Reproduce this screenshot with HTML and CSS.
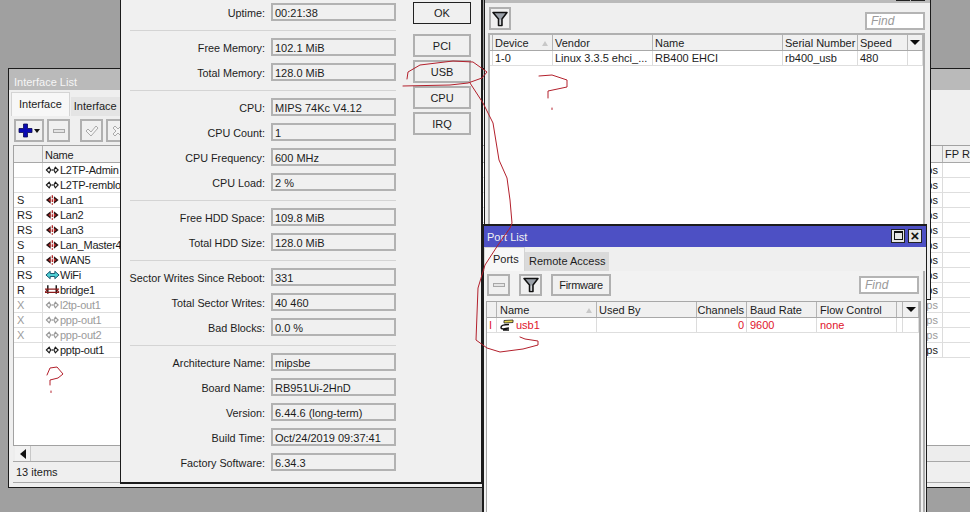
FILE: index.html
```html
<!DOCTYPE html>
<html lang="en">
<head>
<meta charset="utf-8">
<title>Interface List</title>
<link rel="stylesheet" href="styles.css">
</head>
<body>
<svg class="defs" width="0" height="0" aria-hidden="true">
  <defs>
    <symbol id="ic-tunnel" viewBox="0 0 16 10">
      <path d="M1.500 5 4.500 2l1.500 3-1.500 3zM14 5l-3-3-1.500 3 1.500 3z" fill="#f2f2f2" stroke="#1a1a1a" stroke-width="1.200"/>
      <path d="M6.800 5h2" stroke="#222" stroke-width="1.400"/>
    </symbol>
    <symbol id="ic-tunnel-off" viewBox="0 0 16 10">
      <path d="M1.500 5 4.500 2l1.500 3-1.500 3zM14 5l-3-3-1.500 3 1.500 3z" fill="#f6f6f6" stroke="#999" stroke-width="1.200"/>
      <path d="M6.800 5h2" stroke="#999" stroke-width="1.400"/>
    </symbol>
    <symbol id="ic-lan" viewBox="0 0 16 10">
      <path d="M1 5 6 1v8zM14.500 5l-5-4v8z" fill="#2a1414"/>
      <path d="M3.500 5 6 3v4zM12 5 9.500 3v4z" fill="#c02828"/>
      <path d="M7.800 0v10" stroke="#b01818" stroke-width="1.300" stroke-dasharray="3 1.200"/>
    </symbol>
    <symbol id="ic-wifi" viewBox="0 0 16 10">
      <path d="M1 5 5.500 1v2.400h5V1L15 5l-4.500 4V6.600h-5V9z" fill="#4fd0d4" stroke="#14506a" stroke-width="1"/>
    </symbol>
    <symbol id="ic-bridge" viewBox="0 0 16 10">
      <path d="M3 0v9M12 0v9" stroke="#111" stroke-width="1.500"/>
      <path d="M0 4h15M0 7.500h15M3 4 0 7.500M12 4l3 3.500" stroke="#8a1c1c" stroke-width="1.200" fill="none"/>
    </symbol>
    <symbol id="ic-filter" viewBox="0 0 16 16">
      <path d="M1 1.500h14L10 8v6.500H6.500V8z" fill="#9aa0a8" stroke="#111" stroke-width="1.500" stroke-linejoin="round"/>
      <path d="M8.200 8.500v5.500" stroke="#e8e8e8" stroke-width="1"/>
    </symbol>
  </defs>
</svg>

<main class="desktop">

  <section class="win win-iface">
    <header class="title title-idle title-iface">Interface List</header>
    <div class="tabs">
      <span class="tab tab-on">Interface</span>
      <span class="tab tab-off tab-wide">Interface List</span>
    </div>
    <div class="toolbar">
      <button class="btn btn-add">
        <svg width="15" height="15" viewBox="0 0 15 15"><path d="M5.500 1h4v4.500H14v4H9.500V14h-4V9.500H1v-4h4.500z" fill="#0a0ab4" stroke="#0b0b50" stroke-width=".8"/></svg>
        <i class="caret caret-small"></i>
      </button>
      <button class="btn btn-sq"><i class="dash"></i></button>
      <button class="btn btn-sq btn-sep">
        <svg width="14" height="12" viewBox="0 0 14 12"><path d="m1 6 2-2 3 3 5-6 2 2-7 8z" fill="#f4f4f4" stroke="#aaa"/></svg>
      </button>
      <button class="btn btn-sq">
        <svg width="12" height="12" viewBox="0 0 12 12"><path d="M1 3 3 1l3 3 3-3 2 2-3 3 3 3-2 2-3-3-3 3-2-2 3-3z" fill="#f4f4f4" stroke="#aaa"/></svg>
      </button>
    </div>
    <div class="table table-iface">
      <div class="row row-head">
        <span class="cell c-flag"></span><span class="cell c-iname">Name</span><span class="cell c-rate"></span><span class="cell c-fp">FP Rx</span>
      </div>
      <div class="row"><span class="cell c-flag"></span><span class="cell c-iname"><svg class="ic"><use href="#ic-tunnel"/></svg>L2TP-Admin</span><span class="cell c-rate">0 bps</span><span class="cell c-fp"></span></div>
      <div class="row"><span class="cell c-flag"></span><span class="cell c-iname"><svg class="ic"><use href="#ic-tunnel"/></svg>L2TP-remblock</span><span class="cell c-rate">0 bps</span><span class="cell c-fp"></span></div>
      <div class="row"><span class="cell c-flag">S</span><span class="cell c-iname"><svg class="ic"><use href="#ic-lan"/></svg>Lan1</span><span class="cell c-rate">0 bps</span><span class="cell c-fp"></span></div>
      <div class="row"><span class="cell c-flag">RS</span><span class="cell c-iname"><svg class="ic"><use href="#ic-lan"/></svg>Lan2</span><span class="cell c-rate">0 bps</span><span class="cell c-fp"></span></div>
      <div class="row"><span class="cell c-flag">RS</span><span class="cell c-iname"><svg class="ic"><use href="#ic-lan"/></svg>Lan3</span><span class="cell c-rate">0 bps</span><span class="cell c-fp"></span></div>
      <div class="row"><span class="cell c-flag">S</span><span class="cell c-iname"><svg class="ic"><use href="#ic-lan"/></svg>Lan_Master4</span><span class="cell c-rate">0 bps</span><span class="cell c-fp"></span></div>
      <div class="row"><span class="cell c-flag">R</span><span class="cell c-iname"><svg class="ic"><use href="#ic-lan"/></svg>WAN5</span><span class="cell c-rate">0 bps</span><span class="cell c-fp"></span></div>
      <div class="row"><span class="cell c-flag">RS</span><span class="cell c-iname"><svg class="ic"><use href="#ic-wifi"/></svg>WiFi</span><span class="cell c-rate">0 bps</span><span class="cell c-fp"></span></div>
      <div class="row"><span class="cell c-flag">R</span><span class="cell c-iname"><svg class="ic"><use href="#ic-bridge"/></svg>bridge1</span><span class="cell c-rate">0 bps</span><span class="cell c-fp"></span></div>
      <div class="row row-off"><span class="cell c-flag">X</span><span class="cell c-iname"><svg class="ic"><use href="#ic-tunnel-off"/></svg>l2tp-out1</span><span class="cell c-rate">0 bps</span><span class="cell c-fp"></span></div>
      <div class="row row-off"><span class="cell c-flag">X</span><span class="cell c-iname"><svg class="ic"><use href="#ic-tunnel-off"/></svg>ppp-out1</span><span class="cell c-rate">0 bps</span><span class="cell c-fp"></span></div>
      <div class="row row-off"><span class="cell c-flag">X</span><span class="cell c-iname"><svg class="ic"><use href="#ic-tunnel-off"/></svg>ppp-out2</span><span class="cell c-rate">0 bps</span><span class="cell c-fp"></span></div>
      <div class="row"><span class="cell c-flag"></span><span class="cell c-iname"><svg class="ic"><use href="#ic-tunnel"/></svg>pptp-out1</span><span class="cell c-rate">0 bps</span><span class="cell c-fp"></span></div>
    </div>
    <div class="hscroll"><span class="scroll-btn"><i class="arrow-left"></i></span></div>
    <div class="status">13 items</div>
  </section>

  <section class="win win-device">
    <header class="title title-idle title-device">
      <span class="tb-btn"></span><span class="tb-btn"></span>
    </header>
    <div class="toolbar toolbar-device">
      <button class="btn btn-sq btn-filter"><svg width="16" height="16"><use href="#ic-filter"/></svg></button>
      <span class="find find-device">Find</span>
    </div>
    <div class="table table-device">
      <div class="row row-head">
        <span class="cell d-gap"></span>
        <span class="cell d-dev">Device<i class="sort"></i></span>
        <span class="cell d-ven">Vendor</span>
        <span class="cell d-nam">Name</span>
        <span class="cell d-ser">Serial Number</span>
        <span class="cell d-spd">Speed</span>
        <span class="cell d-more"><i class="caret"></i></span>
      </div>
      <div class="row">
        <span class="cell d-gap"></span>
        <span class="cell d-dev">1-0</span>
        <span class="cell d-ven">Linux 3.3.5 ehci_...</span>
        <span class="cell d-nam">RB400 EHCI</span>
        <span class="cell d-ser">rb400_usb</span>
        <span class="cell d-spd">480</span>
        <span class="cell d-more"></span>
      </div>
    </div>
  </section>

  <section class="win win-info">
    <div class="info-fields">
      <div class="info-row"><span class="info-label">Uptime:</span><span class="field">00:21:38</span></div>
      <hr class="rule">
      <div class="info-row"><span class="info-label">Free Memory:</span><span class="field">102.1 MiB</span></div>
      <div class="info-row"><span class="info-label">Total Memory:</span><span class="field">128.0 MiB</span></div>
      <hr class="rule">
      <div class="info-row"><span class="info-label">CPU:</span><span class="field">MIPS 74Kc V4.12</span></div>
      <div class="info-row"><span class="info-label">CPU Count:</span><span class="field">1</span></div>
      <div class="info-row"><span class="info-label">CPU Frequency:</span><span class="field">600 MHz</span></div>
      <div class="info-row"><span class="info-label">CPU Load:</span><span class="field">2 %</span></div>
      <hr class="rule">
      <div class="info-row"><span class="info-label">Free HDD Space:</span><span class="field">109.8 MiB</span></div>
      <div class="info-row"><span class="info-label">Total HDD Size:</span><span class="field">128.0 MiB</span></div>
      <hr class="rule">
      <div class="info-row"><span class="info-label">Sector Writes Since Reboot:</span><span class="field">331</span></div>
      <div class="info-row"><span class="info-label">Total Sector Writes:</span><span class="field">40 460</span></div>
      <div class="info-row"><span class="info-label">Bad Blocks:</span><span class="field">0.0 %</span></div>
      <hr class="rule">
      <div class="info-row"><span class="info-label">Architecture Name:</span><span class="field">mipsbe</span></div>
      <div class="info-row"><span class="info-label">Board Name:</span><span class="field">RB951Ui-2HnD</span></div>
      <div class="info-row"><span class="info-label">Version:</span><span class="field">6.44.6 (long-term)</span></div>
      <div class="info-row"><span class="info-label">Build Time:</span><span class="field">Oct/24/2019 09:37:41</span></div>
      <div class="info-row"><span class="info-label">Factory Software:</span><span class="field">6.34.3</span></div>
    </div>
    <div class="info-actions">
      <button class="btn action action-ok">OK</button>
      <button class="btn action">PCI</button>
      <button class="btn action">USB</button>
      <button class="btn action">CPU</button>
      <button class="btn action">IRQ</button>
    </div>
  </section>

  <section class="win win-port">
    <header class="title title-active">
      <span>Port List</span>
      <span class="tb-group">
        <span class="tb-btn tb-max"><i></i></span>
        <span class="tb-btn tb-close">×</span>
      </span>
    </header>
    <div class="tabs tabs-port">
      <span class="tab tab-on tab-ports">Ports</span>
      <span class="tab tab-off tab-remote">Remote Access</span>
    </div>
    <div class="port-panel">
      <div class="toolbar toolbar-port">
        <button class="btn btn-sq"><i class="dash"></i></button>
        <button class="btn btn-sq btn-sep"><svg width="16" height="16"><use href="#ic-filter"/></svg></button>
        <button class="btn btn-text">Firmware</button>
        <span class="find find-port">Find</span>
      </div>
      <div class="table table-port">
        <div class="row row-head">
          <span class="cell p-flag"></span>
          <span class="cell p-name">Name<i class="sort"></i></span>
          <span class="cell p-used">Used By</span>
          <span class="cell p-chan">Channels</span>
          <span class="cell p-baud">Baud Rate</span>
          <span class="cell p-flow">Flow Control</span>
          <span class="cell p-gap"></span>
          <span class="cell p-more"><i class="caret"></i></span>
        </div>
        <div class="row row-alert">
          <span class="cell p-flag">I</span>
          <span class="cell p-name">
            <svg class="ic-usb" width="15" height="12" viewBox="0 0 15 12"><path d="M4 1.500 13 1v2.500L4 4z" fill="#e8d84a" stroke="#222" stroke-width=".8"/><path d="M9 5.500C4 5.500 1 6 1 8.500s5 1 8 .5M3 11h6" fill="none" stroke="#111" stroke-width="1.400"/></svg>usb1
          </span>
          <span class="cell p-used"></span>
          <span class="cell p-chan">0</span>
          <span class="cell p-baud">9600</span>
          <span class="cell p-flow">none</span>
          <span class="cell p-gap"></span>
          <span class="cell p-more"></span>
        </div>
      </div>
    </div>
  </section>

  <svg class="ink" viewBox="0 0 970 512" width="970" height="512" aria-hidden="true">
    <path d="M403 86 450 85 468 83 482 78 487 72 473 62 453 61 420 65 408 72 407 79"/>
    <path d="M470 83 483 103 493 123 499 160 507 178 510 200 512 223 510 228 498 245 485 265 478 288 476 340 487 348 500 352 523 349 538 345 538 341 525 339 520 337"/>
    <path d="M539 76 552 75 567 80 567 87 548 91 548 98M552 108v1.500"/>
    <path d="M47 375 50 368 57 367 63 374 58 378 50 380 50 385M51 391v1.500"/>
  </svg>
</main>
</body>
</html>
```
FILE: styles.css
```css
* { box-sizing: border-box; }

html, body { margin: 0; padding: 0; }

body {
  font-family: "Liberation Sans", Arial, sans-serif;
  font-size: 11px;
  color: #1c1c1c;
}

.defs { position: absolute; }

.desktop {
  position: relative;
  width: 970px;
  height: 512px;
  overflow: hidden;
  background: #a0a0a0;
}

.win {
  position: absolute;
  display: flex;
  flex-direction: column;
  background: #efefef;
  border: 1px solid #1c1c1c;
}

.win-iface { left: 8px; top: 68px; width: 1000px; height: 420px; }
.win-device { left: 484px; top: -18px; width: 447px; height: 318px; }
.win-info { left: 120px; top: -2px; width: 363px; height: 486px; flex-direction: row; background: #f0f0f0; padding: 4px 0 0 1px; border-right-width: 2px; border-bottom-width: 2px; }
.win-port { left: 482px; top: 224px; width: 445px; height: 300px; border-width: 2px 1px 1px 2px; }

/* title bars */
.title {
  flex: none;
  display: flex;
  align-items: center;
  height: 21px;
  padding-left: 5px;
  font-size: 11px;
}
.title-iface { padding-top: 5px; }
.title-idle { background: #bababa; color: #f6f6f6; }
.title-active { justify-content: space-between; padding-right: 4px; background: #4d50c4; color: #f2f2f2; padding-left: 3px; }
.title-device { justify-content: flex-end; align-items: flex-end; gap: 1px; height: 20px; padding-right: 5px; }
.tb-group { display: flex; gap: 3px; margin-bottom: 2px; }
.tb-btn {
  display: flex;
  align-items: center;
  justify-content: center;
  width: 14px;
  height: 14px;
  background: #e6e6e6;
  border: 1px solid #222;
  color: #111;
  font-size: 15px;
  line-height: 1;
  font-weight: bold;
}
.title-device .tb-btn { margin-bottom: 2px; height: 12px; }
.tb-max i { width: 9px; height: 9px; border: 1px solid #111; border-top-width: 2px; }

/* tabs */
.tabs {
  flex: none;
  display: flex;
  align-items: flex-end;
  height: 26px;
  padding-left: 2px;
}
.tab {
  display: flex;
  align-items: center;
  height: 24px;
  padding: 0 7px 2px;
  white-space: nowrap;
}
.tab-on { background: #f7f7f7; border: 1px solid #d4d4d4; border-bottom: 0; }
.tab-off { height: 19px; background: #dadada; }
.tab-wide { width: 120px; margin-left: 1px; padding-left: 3px; background: #e4e4e4; }
.tabs-port { height: 24px; padding-left: 0; }
.tab-ports { width: 41px; padding-left: 8px; }
.tab-remote { width: 84px; padding-left: 4px; }

/* toolbars and buttons */
.toolbar { flex: none; display: flex; align-items: flex-start; height: 27px; padding: 3px 0 0 5px; gap: 3px; }
.toolbar-device { height: 30px; padding: 4px 5px 0 4px; justify-content: space-between; }
.toolbar-port { height: 30px; padding: 3px 2px 0 3px; gap: 9px; }
.toolbar-port .btn { height: 22px; }

.btn {
  display: flex;
  align-items: center;
  justify-content: center;
  padding: 0;
  background: #f0f0f0;
  border: 2px solid #b0b0b0;
  border-radius: 0;
  font: inherit;
  color: inherit;
}
.btn-add { width: 30px; height: 23px; gap: 1px; }
.btn-sq { width: 23px; height: 23px; }
.btn-sep { margin-left: 7px; }
.toolbar-port .btn-sep { margin-left: 0; }
.btn-text { width: 60px; height: 23px; letter-spacing: -.3px; }
.btn-filter { width: 22px; }

.dash { display: block; width: 12px; height: 4px; background: #e4e4e4; border: 1px solid #a8a8a8; }

.caret { display: block; width: 0; height: 0; border: 5px solid transparent; border-top: 5px solid #0c0c0c; border-bottom: 0; }
.caret-small { border-width: 4px 3.500px 0; border-top-color: #111; }

.find {
  display: flex;
  align-items: center;
  width: 60px;
  height: 18px;
  padding-left: 4px;
  background: #fff;
  border: 2px solid #b4b4b4;
  color: #9a9a9a;
  font-style: italic;
  font-size: 12px;
}
.find-device { margin-top: 5px; }
.find-port { margin: 2px 0 0 auto; }

/* tables */
.table { display: flex; flex-direction: column; background: #fff; border: 1px solid #a2a2a2; overflow: hidden; }
.table-iface { flex: none; height: 301px; margin: 2px 0 0 4px; }
.table-device { flex: 1; margin: 0 5px 0 3px; border-width: 2px; border-color: #b0b0b0; }
.table-port { flex: 1; margin: 0 0 0 2px; border-width: 1px 2px 0 1px; border-color: #a8a8a8; }

.row { flex: none; display: flex; height: 15px; border-bottom: 1px solid #dedede; }
.row-head { height: 17px; background: #f0f0f0; border-bottom: 1px solid #a8a8a8; }
.table-iface .row-head { padding-top: 0; }
.table-iface .row-head .c-iname { padding-top: 1px; }
.table-device .row-head,
.table-port .row-head { height: 16px; }
.row-off { color: #9b9b9b; }
.row-alert { color: #e0142c; }

.cell {
  position: relative;
  flex: none;
  display: flex;
  align-items: center;
  padding: 0 2px;
  border-right: 1px solid #dcdcdc;
  white-space: nowrap;
  overflow: hidden;
}
.row-head .cell { border-right-color: #b4b4b4; }

.c-flag { width: 29px; padding-left: 3px; }
.c-iname { width: 829px; letter-spacing: -.25px; }
.c-rate { width: 71px; justify-content: flex-end; padding-right: 4px; }
.c-fp { width: 60px; }

.ic { flex: none; width: 15px; height: 10px; }

.d-gap { width: 3px; padding: 0; }
.d-dev { width: 60px; }
.d-ven { width: 100px; }
.d-nam { width: 130px; }
.d-ser { width: 75px; }
.d-spd { width: 50px; }
.d-more { flex: 1; justify-content: center; }

.sort {
  position: absolute;
  right: 4px;
  top: 6px;
  width: 0;
  height: 0;
  border: 3.500px solid transparent;
  border-bottom: 5px solid #c8c8c8;
  border-top: 0;
}

.p-flag { width: 10px; padding: 0 0 0 2px; }
.p-name { width: 100px; padding-left: 3px; }
.ic-usb { flex: none; margin-right: 1px; }
.p-used { width: 100px; }
.p-chan { width: 50px; justify-content: flex-end; padding-left: 0; }
.p-baud { width: 70px; padding-left: 3px; }
.p-flow { width: 80px; padding-left: 3px; }
.p-gap { width: 6px; }
.p-more { flex: 1; justify-content: center; }

.port-panel { flex: 1; display: flex; flex-direction: column; min-height: 0; margin-right: 1px; padding-right: 2px; background: #f2f2f2; border-right: 2px solid #b0b0b0; }

/* interface list foot */
.hscroll { flex: none; display: flex; height: 16px; margin-left: 4px; background: #ededed; border-bottom: 1px solid #a8a8a8; }
.scroll-btn { display: flex; align-items: center; justify-content: center; width: 16px; margin-left: 2px; background: #f2f2f2; border-right: 1px solid #c8c8c8; }
.arrow-left { width: 0; height: 0; border: 5px solid transparent; border-right: 6px solid #111; border-left: 0; }
.status { flex: none; display: flex; align-items: center; height: 21px; margin-left: 4px; padding-left: 3px; border-bottom: 1px solid #a8a8a8; }

/* system info */
.info-fields { flex: none; width: 276px; display: flex; flex-direction: column; }
.info-row { flex: none; display: flex; align-items: center; gap: 6px; height: 18px; margin-bottom: 7px; }
.info-row:has(+ .rule) { margin-bottom: 0; }
.info-label { width: 143px; padding-top: 1px; font-size: 10.8px; text-align: right; white-space: nowrap; }
.field {
  display: flex;
  align-items: center;
  width: 125px;
  height: 18px;
  padding: 1px 0 0 2px;
  background: #f0f0f0;
  border: 2px solid #b2b2b2;
}
.rule { width: 266px; height: 1px; margin: 9px 0 7px 8px; border: 0; background: #d4d4d4; }

.info-actions { flex: none; display: flex; flex-direction: column; gap: 3px; margin: -1px 0 0 15px; width: 58px; }
.action { height: 23px; }
.action-ok { margin-bottom: 7px; height: 22px; border-color: #222; border-width: 1px; }

/* red pen annotations */
.ink { position: absolute; left: 0; top: 0; pointer-events: none; }
.ink path { fill: none; stroke: #b3202c; stroke-width: 1; stroke-linejoin: round; stroke-linecap: round; }
```
